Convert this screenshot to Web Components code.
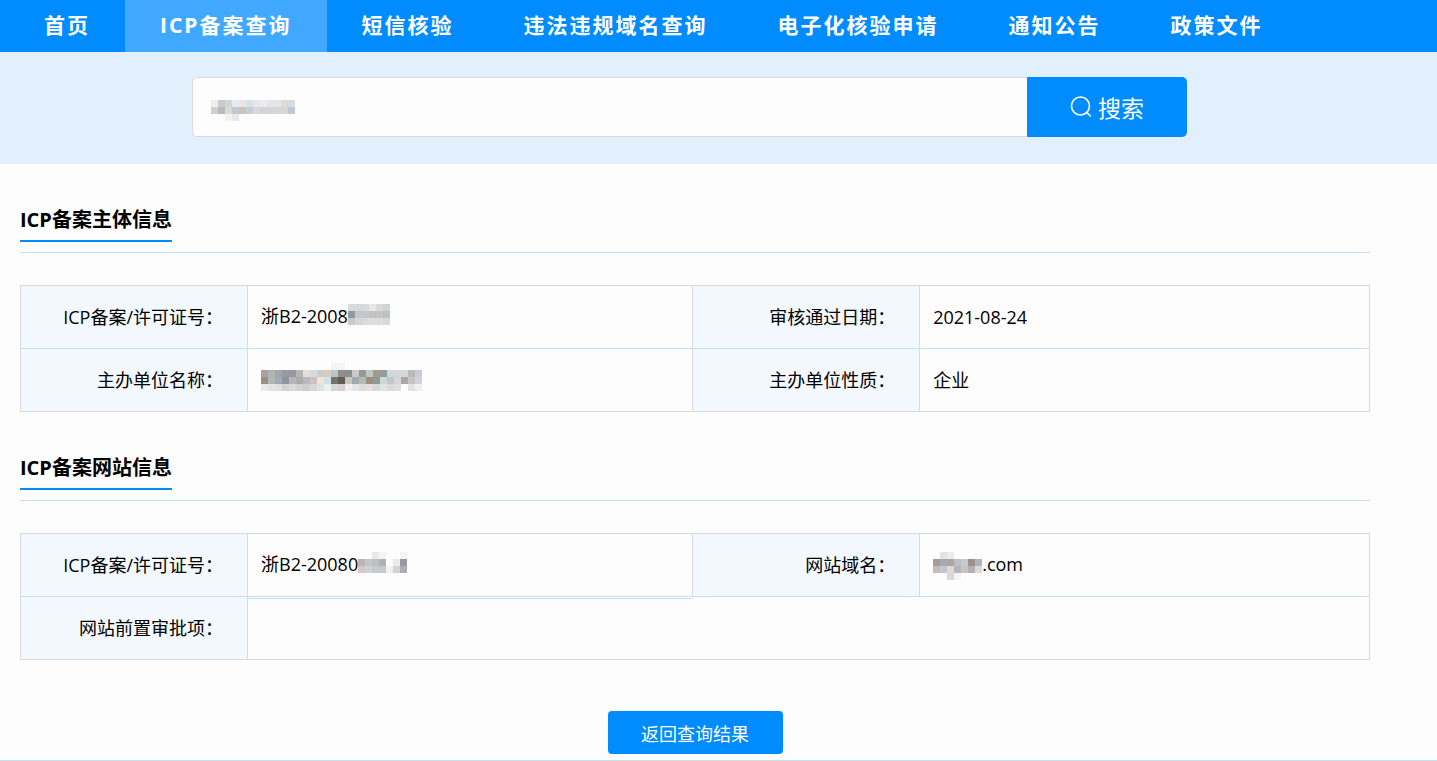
<!DOCTYPE html>
<html lang="zh-CN">
<head>
<meta charset="utf-8">
<meta name="viewport" content="width=device-width, initial-scale=1">
<title>ICP备案查询</title>
<style>
body {
    margin: 0;
    background-color: #fdfdfd;
    color: #000;
    font-family: "Open Sans", "Noto Sans CJK SC", sans-serif;
    font-size: 18px;
    --main-blue: #008cff;
    --line-blue: #c3dff3;
    --line-gray: #d9dadb;
}
main {
    padding: 0 67px 6px 20px;
    border-bottom: 1px solid #c9dfea;
}
</style>
</head>
<body>

<site-nav>
    <nav-item href="#home">首页</nav-item>
    <nav-item href="#icp" active>ICP备案查询</nav-item>
    <nav-item href="#sms">短信核验</nav-item>
    <nav-item href="#illegal">违法违规域名查询</nav-item>
    <nav-item href="#verify">电子化核验申请</nav-item>
    <nav-item href="#notice">通知公告</nav-item>
    <nav-item href="#policy">政策文件</nav-item>
</site-nav>

<search-bar>搜索</search-bar>

<main>
    <info-section>
        <span slot="title">ICP备案主体信息</span>
        <info-table source="owner"></info-table>
    </info-section>
    <info-section>
        <span slot="title">ICP备案网站信息</span>
        <info-table source="website"></info-table>
    </info-section>
    <back-button>返回查询结果</back-button>
</main>

<script>
// hidden values: rows split by "|", one colour per cell, "-" is an empty cell
const masks = {
    keyword: '- - - - - - - - - - - -|efeeea cacace d3d3d1 e7ebef e9e5e2 dbe0e5 e5e7ea ececec e5e5e7 e3e5e8 dddad9 d8dbdf|cfcfcc b8b9c0 dadbd5 c3c8d0 cac5bf c5cdd8 d9d9d9 d3d5d7 d5d6d8 d5d6d8 ddd6d1 c0c8d3|- - f4f4ef e6e8ee - - - - - - - -',
    ownerLicence: 'dadada d7d9da d8dadb e9e8e8 d6d9da d3d5d5|92969d c5c6c9 c6c7c8 c2c2c2 c5c5c6 bec1c2|c8c9ca d3d5d6 dadbdb dfdddb dddddd d7d9da|- - - - - -',
    ownerName: '- - - - - - - - - - f4f4f4 f4f4f4 - - - - - - - - - - -|ada1a0 b1b5b1 9ba8ae 969ba2 99989f b5b5b8 dfe0df d9d9dc c8cdd2 d9ccba b4c6d2 8e908d 8e8f8c cccac6 94979e bfc8c0 a8988e 909d99 cbdbdb d5d6da d3d8de b8bbb6 cbcbd0|9f8d82 adb9b5 a0abb8 92949c b5b5b9 adacac b9b9bd cac2c7 efe7d5 d0e1ea 74736e 625b58 c7c4c1 9fa8b3 b0bdb1 9e8c80 8b9997 ccd8d8 c6c6c6 d4d8de b0a4a4 c4c4c7 d8cfda|ece9ec e6e4df dddfe1 d2d3d5 dadadc d2d2d3 cfcecf d7d7da e2e0e0 e8f1f6 d7d7d6 d5d1d1 f3f0ec e2e5ea dadfdb e9dedc d4dcdb dee5e5 dcdcda dfdfe3 - e4e3df efeff5|- - - - - - - - - - - - - - - - - - - - - - -',
    siteLicence: '- - e8e9ea f3f4f4 - - f3f5f4|beb6b2 c2c7ca bfc1c1 adb2b6 - efe9e6 999a9f|d2cac9 cdd2d4 c7cbcc c8c9cd f0f0ec d3d4d6 adadb3|- - - - - - -',
    domain: '- e3e2e2 ebebeb - - - -|a69d97 a4adb6 afa5a0 b8c2c8 c7caca 99908f b1b4b8|c5bcb3 c0c6d2 ddd9d7 b4b4ba c7c5c0 b5b0b7 dadcda|- - ddd8d5 f2f5f8 - - -'
};

const records = {
    owner: [
        [{ label: 'ICP备案/许可证号：', text: '浙B2-2008', mask: 'ownerLicence' }, { label: '审核通过日期：', text: '2021-08-24' }],
        [{ label: '主办单位名称：', mask: 'ownerName' }, { label: '主办单位性质：', text: '企业' }]
    ],
    website: [
        [{ label: 'ICP备案/许可证号：', text: '浙B2-20080', mask: 'siteLicence' }, { label: '网站域名：', mask: 'domain', after: '.com' }],
        [{ label: '网站前置审批项：' }]
    ]
};

class SiteNav extends HTMLElement {
    constructor() {
        super();
        this.attachShadow({ mode: 'open' }).innerHTML = `
<style>
:host {
    display: block;
    background-color: var(--main-blue);
}
nav {
    display: flex;
    height: 52px;
    padding-left: 9px;
}
</style>
<nav><slot></slot></nav>
`;
    }
}

class NavItem extends HTMLElement {
    constructor() {
        super();
        this.attachShadow({ mode: 'open' }).innerHTML = `
<style>
:host {
    display: flex;
}
a {
    padding: 0 35px;
    line-height: 50px;
    font-size: 21px;
    font-weight: bold;
    letter-spacing: 2px;
    white-space: nowrap;
    color: #fff;
    text-decoration: none;
}
:host([active]) a,
a:hover {
    background-color: #40a9ff;
}
</style>
<a><slot></slot></a>
`;
    }

    connectedCallback() {
        this.shadowRoot.querySelector('a').href = this.getAttribute('href');
    }
}

class PixelMask extends HTMLElement {
    constructor() {
        super();
        this.attachShadow({ mode: 'open' });
    }

    connectedCallback() {
        const size = 7;
        const rows = masks[this.getAttribute('name')].split('|').map(row => row.split(' '));
        const width = rows[0].length * size;
        const height = rows.length * size;
        let rects = '';
        rows.forEach((row, y) => {
            row.forEach((color, x) => {
                if (color === '-') return;
                rects += `<rect x="${x * size}" y="${y * size}" width="${size}" height="${size}" fill="#${color}"/>`;
            });
        });
        this.shadowRoot.innerHTML = `
<style>
:host {
    display: inline-block;
    vertical-align: middle;
}
svg {
    display: block;
}
</style>
<svg width="${width}" height="${height}" shape-rendering="crispEdges" aria-hidden="true">${rects}</svg>
`;
    }
}

class SearchBar extends HTMLElement {
    constructor() {
        super();
        this.attachShadow({ mode: 'open' }).innerHTML = `
<style>
:host {
    display: block;
    padding: 25px 58px 27px 0;
    background-color: #e2f0fe;
}
form {
    display: flex;
    max-width: 995px;
    height: 60px;
    margin: 0 auto;
}
.field {
    display: flex;
    flex: 1;
    align-items: center;
    box-sizing: border-box;
    padding-left: 18px;
    background-color: #fdfdfd;
    border: 1px solid #d8dadc;
    border-right: none;
    border-radius: 5px 0 0 5px;
}
input {
    flex: 1;
    min-width: 0;
    height: 100%;
    padding: 0 8px;
    border: none;
    outline: none;
    background: none;
    font: inherit;
}
button {
    display: flex;
    align-items: center;
    justify-content: center;
    gap: 6px;
    width: 160px;
    padding: 0;
    border: none;
    border-radius: 0 5px 5px 0;
    background-color: var(--main-blue);
    color: #fff;
    font-family: inherit;
    font-size: 23px;
    cursor: pointer;
}
</style>
<form>
    <div class="field">
        <pixel-mask name="keyword"></pixel-mask>
        <input type="text" aria-label="域名">
    </div>
    <button type="button">
        <svg width="22" height="22" viewBox="0 0 22 22" fill="none" stroke="#fff" stroke-width="1.6" stroke-linecap="round" aria-hidden="true">
            <circle cx="10.5" cy="10" r="9"/>
            <path d="M16.8 16.4L20.4 20"/>
        </svg>
        <slot></slot>
    </button>
</form>
`;
    }
}

class InfoSection extends HTMLElement {
    constructor() {
        super();
        this.attachShadow({ mode: 'open' }).innerHTML = `
<style>
:host {
    display: block;
    padding-top: 36px;
}
header {
    display: flex;
    margin-bottom: 32px;
    padding-bottom: 10px;
    border-bottom: 1px solid var(--line-blue);
}
h2 {
    margin: 0;
    font-size: 20px;
    line-height: 40px;
    border-bottom: 2px solid var(--main-blue);
}
</style>
<header><h2><slot name="title"></slot></h2></header>
<slot></slot>
`;
    }
}

class InfoTable extends HTMLElement {
    constructor() {
        super();
        this.attachShadow({ mode: 'open' });
    }

    connectedCallback() {
        const rows = records[this.getAttribute('source')];
        this.shadowRoot.innerHTML = `
<style>
:host {
    display: block;
}
table {
    width: 100%;
    table-layout: fixed;
    border-collapse: collapse;
    border: 1px solid var(--line-gray);
}
.label {
    width: 227px;
}
.value {
    width: 33%;
}
th, td {
    box-sizing: border-box;
    height: 63px;
    padding: 0;
    border-left: 1px solid var(--line-gray);
    line-height: 28px;
    white-space: nowrap;
}
th {
    padding-right: 24px;
    background-color: #f2f8fd;
    font-weight: normal;
    text-align: right;
}
td {
    padding-left: 13px;
}
tr + tr > * {
    border-top: 1px solid var(--line-blue);
}
/* second rule under the first value when the row below is merged */
td[colspan] {
    background: linear-gradient(var(--line-blue), var(--line-blue)) no-repeat 0 1px / 39.7% 1px;
}
</style>
<table>
    <colgroup><col class="label"><col class="value"><col class="label"><col></colgroup>
    <tbody>${rows.map(row => `<tr>${row.map(cell => this.renderCell(cell, row.length)).join('')}</tr>`).join('')}</tbody>
</table>
`;
    }

    renderCell(cell, count) {
        const mask = cell.mask ? `<pixel-mask name="${cell.mask}"></pixel-mask>` : '';
        const span = count === 1 ? ' colspan="3"' : '';
        return `<th scope="row">${cell.label}</th><td${span}>${cell.text || ''}${mask}${cell.after || ''}</td>`;
    }
}

class BackButton extends HTMLElement {
    constructor() {
        super();
        this.attachShadow({ mode: 'open' }).innerHTML = `
<style>
:host {
    display: flex;
    justify-content: center;
    padding-top: 51px;
}
button {
    width: 175px;
    height: 43px;
    padding: 0;
    border: none;
    border-radius: 4px;
    background-color: var(--main-blue);
    color: #fff;
    font: inherit;
    cursor: pointer;
}
</style>
<button type="button"><slot></slot></button>
`;
    }
}

window.customElements.define('site-nav', SiteNav);
window.customElements.define('nav-item', NavItem);
window.customElements.define('pixel-mask', PixelMask);
window.customElements.define('search-bar', SearchBar);
window.customElements.define('info-section', InfoSection);
window.customElements.define('info-table', InfoTable);
window.customElements.define('back-button', BackButton);
</script>
</body>
</html>
